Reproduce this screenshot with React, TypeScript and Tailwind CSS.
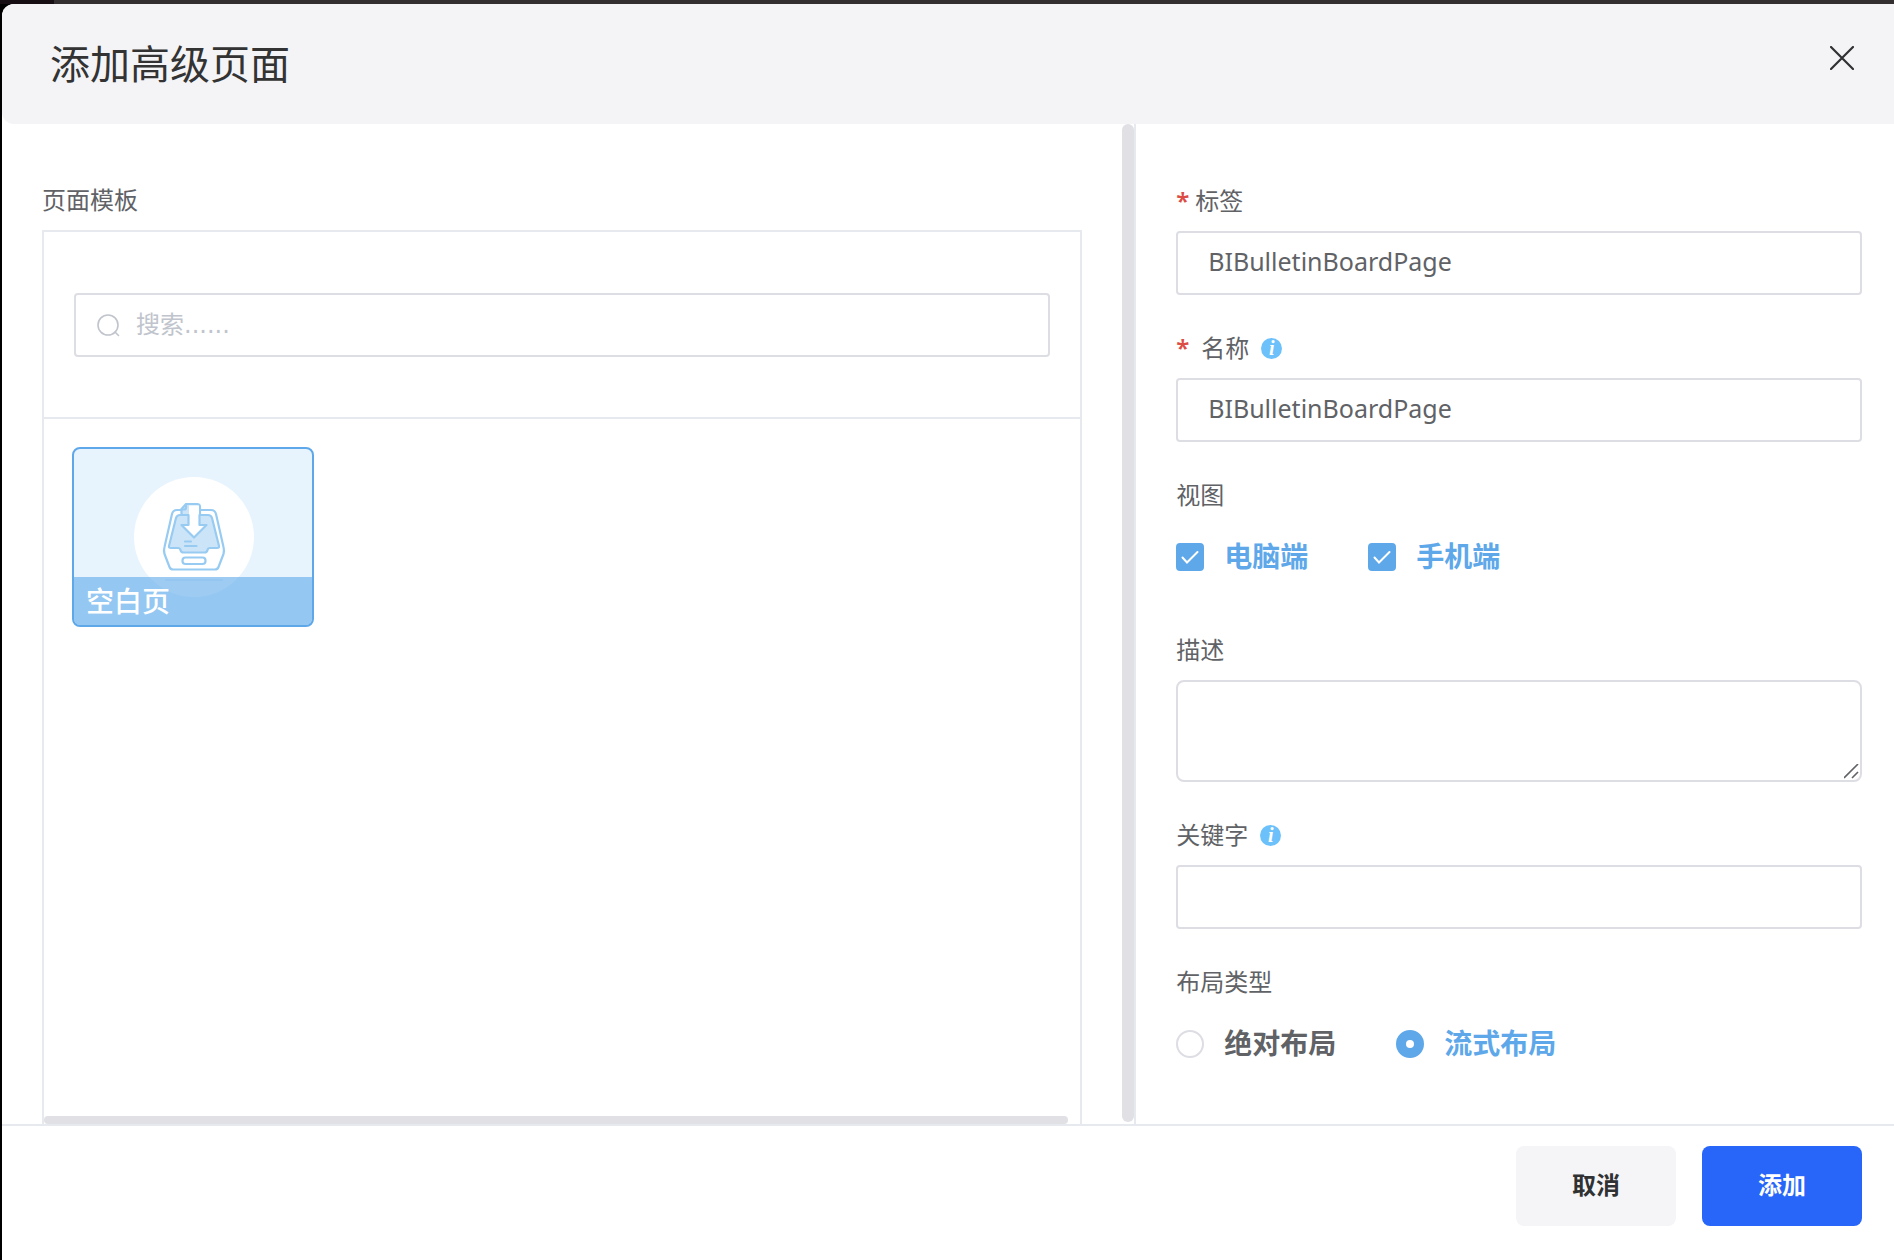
import { useState } from "react";
import { cva } from "class-variance-authority";

const fieldClass =
  "block w-full rounded border-2 border-[#dddde4] bg-white text-[25px] text-[#606266] outline-none focus:border-[#5ea8ea]";

const optionText = cva("pb-0.5 text-[28px] leading-10 font-bold", {
  variants: {
    active: {
      true: "text-[#5ea8ea]",
      false: "text-[#606266]",
    },
  },
});

const buttonStyle = cva("h-20 w-40 rounded-lg pb-0.5 text-2xl font-bold", {
  variants: {
    kind: {
      primary: "bg-[#2766f8] text-white",
      plain: "bg-[#f5f5f8] text-[#303133]",
    },
  },
});

function InfoIcon() {
  return (
    <span className="flex size-[21px] items-center justify-center rounded-full bg-[#6cc1fb] font-['Liberation_Serif',serif] text-xl leading-5 font-bold text-white italic">
      i
    </span>
  );
}

interface FieldLabelProps {
  htmlFor?: string;
  id?: string;
  required?: boolean;
  info?: boolean;
  children: React.ReactNode;
}

function FieldLabel({ htmlFor, id, required, info, children }: FieldLabelProps) {
  const content = (
    <>
      {required && (
        <span className={info ? "mr-3 font-semibold text-[#dd4b45]" : "mr-1.5 font-semibold text-[#dd4b45]"}>*</span>
      )}
      <span>{children}</span>
      {info && (
        <span className="ml-3">
          <InfoIcon />
        </span>
      )}
    </>
  );
  const className = "mb-[10px] flex items-center text-2xl leading-10 text-[#606266]";

  return htmlFor ? (
    <label htmlFor={htmlFor} className={className}>
      {content}
    </label>
  ) : (
    <div id={id} className={className}>
      {content}
    </div>
  );
}

interface CheckOptionProps {
  label: string;
  checked: boolean;
  onChange: (checked: boolean) => void;
}

function CheckOption({ label, checked, onChange }: CheckOptionProps) {
  return (
    <label className="flex cursor-pointer items-center gap-5">
      <span className="grid size-7 place-items-center">
        <input
          type="checkbox"
          checked={checked}
          onChange={(e) => onChange(e.target.checked)}
          className="col-start-1 row-start-1 size-7 appearance-none rounded border-2 border-[#dddde4] bg-white checked:border-[#5ea8ea] checked:bg-[#5ea8ea]"
        />
        {checked && (
          <svg viewBox="0 0 28 28" className="pointer-events-none z-10 col-start-1 row-start-1 size-7" aria-hidden="true">
            <path d="M6.5 14.5 11 19.5 21.5 9" fill="none" stroke="#fff" strokeWidth="2" strokeLinecap="round" />
          </svg>
        )}
      </span>
      <span className={optionText({ active: checked })}>{label}</span>
    </label>
  );
}

function TrayIcon() {
  return (
    <svg viewBox="0 0 120 120" className="size-[120px]" fill="none" stroke="#98cbf2" strokeWidth="2.2" strokeLinejoin="round" strokeLinecap="round" aria-hidden="true">
      <circle cx="60" cy="60" r="60" fill="#fff" stroke="none" />
      <path d="M43 33H77Q81 33 82 37L89.500 70Q90.500 73.500 89.500 77L84.500 90Q83.500 92.500 81 92.500H39Q36.500 92.500 35.500 90L30.500 77Q29.500 73.500 30.500 70L38 37Q39 33 43 33Z" fill="#fff" />
      <path d="M46 38H74Q77 38 78 41L85 69Q85.500 71 83 71H76Q74 71 73.500 73Q73 75.500 70.500 75.500H49.500Q47 75.500 46.500 73Q46 71 44 71H37Q34.500 71 35 69L42 41Q43 38 46 38Z" fill="#cce4f8" />
      <path d="M47.500 37V32L52 27H63Q66 27 66 30V37" fill="#cce4f8" />
      <path d="M47.500 32.500H50Q52 32.500 52 30.500V27.500" />
      <path d="M55 28.500H65V48.500H72L60 60.500 48 48.500H55Z" fill="#fff" stroke="none" />
      <path d="M54.500 38V48H47.500L60 60.500 72.500 48H65.500V38" />
      <path d="M51 64.500H57M51 69H62.500" />
      <rect x="48.500" y="80.500" width="23" height="6.500" rx="3" fill="#fff" />
      <path d="M32 103H88" opacity="0.25" />
    </svg>
  );
}

function TemplatePanel() {
  return (
    <section className="flex w-[calc(60%-1px)] border-r-2 border-[#e6eaee]">
      <div className="flex flex-1 flex-col pt-14 pr-10 pl-10">
        <h2 className="mb-[10px] text-2xl leading-10 text-[#606266]">页面模板</h2>
        <div className="flex flex-1 flex-col border-2 border-b-0 border-[#e6eaee]">
          <div className="border-b-2 border-[#e6eaee] px-[30px] pt-[61px] pb-[60px]">
            <label className="flex h-16 items-center rounded border-2 border-[#dddde4] px-5">
              <svg viewBox="0 0 24 24" className="size-6 shrink-0" fill="none" stroke="#c0c4cc" strokeWidth="1.6" strokeLinecap="round" aria-hidden="true">
                <circle cx="12" cy="12" r="10" />
                <path d="M19 19 22.500 22.500" />
              </svg>
              <input
                type="search"
                aria-label="搜索"
                placeholder="搜索......"
                className="ml-4 min-w-0 flex-1 font-['DejaVu_Sans','Noto_Sans_CJK_SC',sans-serif] text-2xl text-[#606266] outline-none placeholder:text-[#c0c4cc]"
              />
            </label>
          </div>
          <div className="flex-1 p-7">
            <button
              type="button"
              aria-pressed="true"
              className="grid h-[180px] w-[242px] overflow-hidden rounded-lg border-2 border-[#5ea8ea] bg-[#e7f4fe]"
            >
              <span className="col-start-1 row-start-1 justify-self-center pt-7 pl-0.5">
                <TrayIcon />
              </span>
              <span className="z-10 col-start-1 row-start-1 h-12 self-end bg-[#5ea8ea]/60 px-3 text-left text-[28px] leading-12 font-medium text-white">
                空白页
              </span>
            </button>
          </div>
          <div className="mr-3 h-2 rounded-full bg-[#e0e0e5]" />
        </div>
      </div>
      <div className="mb-0.5 w-3 rounded-full bg-[#e0e0e5]" />
    </section>
  );
}

function PropertiesPanel() {
  const [desktop, setDesktop] = useState(true);
  const [mobile, setMobile] = useState(true);
  const [layout, setLayout] = useState("flow");

  const layouts = [
    { value: "absolute", label: "绝对布局" },
    { value: "flow", label: "流式布局" },
  ];

  return (
    <section className="flex flex-1 flex-col gap-[33px] pt-[57px] pr-8 pb-12 pl-10">
      <div>
        <FieldLabel htmlFor="label" required>
          标签
        </FieldLabel>
        <input id="label" defaultValue="BIBulletinBoardPage" className={`${fieldClass} h-16 px-[30px] pb-1`} />
      </div>
      <div>
        <FieldLabel htmlFor="name" required info>
          名称
        </FieldLabel>
        <input id="name" defaultValue="BIBulletinBoardPage" className={`${fieldClass} h-16 px-[30px] pb-1`} />
      </div>
      <div role="group" aria-labelledby="views" className="mb-2">
        <FieldLabel id="views">视图</FieldLabel>
        <div className="flex h-16 items-center gap-[60px]">
          <CheckOption label="电脑端" checked={desktop} onChange={setDesktop} />
          <CheckOption label="手机端" checked={mobile} onChange={setMobile} />
        </div>
      </div>
      <div>
        <FieldLabel htmlFor="description">描述</FieldLabel>
        <div className="relative">
          <textarea id="description" className={`${fieldClass} h-[102px] resize-none rounded-lg px-[30px] py-2`} />
          <svg viewBox="0 0 16 16" className="pointer-events-none absolute right-0.5 bottom-0.5 size-4" stroke="#606266" strokeWidth="1.6" aria-hidden="true">
            <path d="M0 14 14 0M8 14 14 8" />
          </svg>
        </div>
      </div>
      <div>
        <FieldLabel htmlFor="keywords" info>
          关键字
        </FieldLabel>
        <input id="keywords" className={`${fieldClass} h-16 px-[30px] pb-1`} />
      </div>
      <div role="radiogroup" aria-labelledby="layout-type">
        <FieldLabel id="layout-type">布局类型</FieldLabel>
        <div className="flex h-16 items-center gap-[60px]">
          {layouts.map((item) => (
            <label key={item.value} className="flex cursor-pointer items-center gap-5">
              <input
                type="radio"
                name="layout"
                value={item.value}
                checked={layout === item.value}
                onChange={() => setLayout(item.value)}
                className="size-7 appearance-none rounded-full border-2 border-[#dddde4] bg-white checked:border-[10px] checked:border-[#5ea8ea]"
              />
              <span className={optionText({ active: layout === item.value })}>{item.label}</span>
            </label>
          ))}
        </div>
      </div>
    </section>
  );
}

export default function App() {
  return (
    <div className="flex min-h-screen flex-col bg-[#332f31] font-['Noto_Sans','Noto_Sans_CJK_SC',sans-serif]">
      <div className="h-1 w-[54px] bg-[#160e12]" />
      <div className="flex flex-1 flex-col bg-black pl-0.5">
        <div role="dialog" aria-labelledby="title" className="flex flex-1 flex-col rounded-tl-xl bg-white">
          <header className="flex h-[120px] items-center justify-between rounded-l-xl bg-[#f4f4f7] pr-10 pl-12">
            <h1 id="title" className="text-[40px] leading-[60px] text-[#333333]">
              添加高级页面
            </h1>
            <button type="button" aria-label="关闭" className="mb-3">
              <svg viewBox="0 0 24 24" className="size-6" stroke="#303133" strokeWidth="2.2" strokeLinecap="round" aria-hidden="true">
                <path d="M1 1 23 23M23 1 1 23" />
              </svg>
            </button>
          </header>
          <main className="flex flex-1">
            <TemplatePanel />
            <PropertiesPanel />
          </main>
          <footer className="flex justify-end gap-[26px] border-t-2 border-[#e6eaee] pt-5 pr-8 pb-[34px]">
            <button type="button" className={buttonStyle({ kind: "plain" })}>
              取消
            </button>
            <button type="button" className={buttonStyle({ kind: "primary" })}>
              添加
            </button>
          </footer>
        </div>
      </div>
    </div>
  );
}
